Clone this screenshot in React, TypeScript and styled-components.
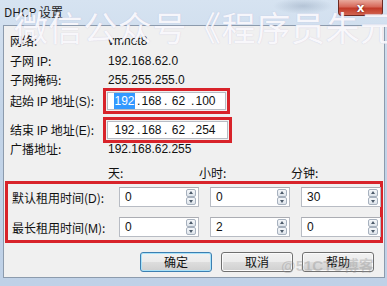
import React from "react";
import styled, { createGlobalStyle } from "styled-components";

const Global = createGlobalStyle`
  html, body { margin: 0; padding: 0; background: #fff; }
  body { font-family: "Noto Sans CJK SC", "Liberation Sans", sans-serif; }
`;

const Window = styled.div`
  position: relative;
  width: 387px;
  height: 286px;
  overflow: hidden;
  box-sizing: border-box;
  padding: 0 2px 8px 3px;
  display: flex;
  flex-direction: column;
  background: linear-gradient(180deg, #d6e3f1 0%, #c3d4e8 40%, #bfd1e7 100%);
`;

const TitleBar = styled.div`
  height: 25px;
  display: flex;
  align-items: flex-start;
  justify-content: space-between;
  background: radial-gradient(ellipse 30px 8px at 300px 6px, rgba(120, 140, 165, 0.35), transparent);
`;

const Title = styled.span`
  margin: 4px 0 0 1px;
  font-size: 12px;
  line-height: 16px;
  color: #1e1e1e;
`;

const CloseBtn = styled.div`
  width: 45px;
  height: 16px;
  margin-right: 2px;
  border: 1px solid #6d2a22;
  border-top: none;
  border-radius: 0 0 4px 4px;
  box-sizing: border-box;
  background: linear-gradient(180deg, #e9a99c 0%, #d7695a 45%, #c23b29 55%, #d2644f 100%);
  display: flex;
  align-items: center;
  justify-content: center;
  color: #fff;
  font: bold 12px "DejaVu Sans", sans-serif;
  line-height: 12px;
  text-shadow: 0 0 2px #5a1008;
`;

const Client = styled.div`
  flex: 1;
  border: 1px solid #8c9bad;
  background: #f0f0f0;
  padding: 5px 10px 0 6px;
  font-size: 12px;
  color: #111;
`;

const Row = styled.div<{ $h: number }>`
  height: ${(p) => p.$h}px;
  display: grid;
  grid-template-columns: 98px 1fr;
  align-items: center;
  line-height: 14px;
`;

const Value = styled.span`
  font-family: "Liberation Sans", sans-serif;
  font-size: 12px;
`;

const Mono = styled.span`
  font-family: "Liberation Sans", sans-serif;
`;

const IpFrame = styled.div<{ $w: number }>`
  width: ${(p) => p.$w}px;
  height: 100%;
  box-sizing: border-box;
  margin-left: -5px;
  border: 3px solid #d8232a;
  padding: 1px;
  display: flex;
`;

const IpInput = styled.div`
  flex: 1;
  background: #fff;
  border: 1px solid #b8bcc4;
  display: flex;
  align-items: center;
  padding-left: 6px;
  font-family: "Liberation Sans", sans-serif;
  font-size: 12px;
`;

const IpPart = styled.span<{ $sel?: boolean }>`
  display: inline-block;
  width: 21px;
  text-align: center;
  padding: 1px 0;
  background: ${(p) => (p.$sel ? "#3399ff" : "transparent")};
  color: ${(p) => (p.$sel ? "#fff" : "#111")};
`;

const Dot = styled.span`
  display: inline-block;
  width: 3px;
  margin: 0 1px 0 2px;
`;

const Headers = styled.div`
  height: 24px;
  display: grid;
  grid-template-columns: 98px 91px 92px 1fr;
  align-items: end;
  line-height: 14px;
  padding-bottom: 1px;
  box-sizing: border-box;
`;

const LeaseBox = styled.div`
  margin: 0 -9px 0 -5px;
  height: 62px;
  box-sizing: border-box;
  border: 3px solid #d8232a;
  padding: 3px 0 3px 4px;
  display: flex;
  flex-direction: column;
  gap: 10px;
`;

const LeaseRow = styled.div`
  height: 20px;
  display: grid;
  grid-template-columns: 96px 80px 80px 80px;
  column-gap: 11px;
  align-items: center;
`;

const SpinBox = styled.div`
  position: relative;
  height: 20px;
  box-sizing: border-box;
  background: #fff;
  border: 1px solid #b8bcc4;
  border-top-color: #abadb3;
  padding: 2px 0 0 5px;
  font-family: "Liberation Sans", sans-serif;
  font-size: 12px;
  line-height: 14px;
`;

const Spinners = styled.div`
  position: absolute;
  right: 2px;
  top: 1px;
  display: flex;
  flex-direction: column;
`;

const SpinBtn = styled.div<{ $up?: boolean }>`
  width: 10px;
  height: 8px;
  box-sizing: border-box;
  border: 1px solid #a7b1be;
  border-radius: 2px;
  background: linear-gradient(180deg, #f6f8fb, #dde3ea);
  position: relative;
  &::after {
    content: "";
    position: absolute;
    left: 2px;
    top: ${(p) => (p.$up ? "1px" : "2px")};
    border-left: 2px solid transparent;
    border-right: 2px solid transparent;
    ${(p) => (p.$up ? "border-bottom: 3px solid #4d5b6b;" : "border-top: 3px solid #4d5b6b;")}
  }
`;

const ButtonRow = styled.div`
  margin-top: 9px;
  display: flex;
  justify-content: flex-end;
  gap: 9px;
`;

const Button = styled.button<{ $primary?: boolean }>`
  width: 72px;
  height: 20px;
  padding: 0;
  border-radius: 3px;
  border: 1px solid ${(p) => (p.$primary ? "#3c7fb1" : "#707070")};
  box-shadow: ${(p) => (p.$primary ? "inset 0 0 0 1px #a9e2f9" : "inset 0 0 0 1px #fbfbfb")};
  background: linear-gradient(180deg, #f2f2f2 0%, #ebebeb 48%, #dddddd 52%, #cfcfcf 100%);
  font-family: "Noto Sans CJK SC", sans-serif;
  font-size: 12px;
  line-height: 16px;
  color: #111;
`;

const Watermark = styled.div`
  position: absolute;
  left: 14px;
  top: 3px;
  white-space: nowrap;
  font-family: "Noto Sans CJK SC", sans-serif;
  font-size: 34px;
  line-height: 48px;
  letter-spacing: 0.6px;
  color: rgba(255, 255, 255, 0.9);
  text-shadow: 0 0 1px rgba(170, 160, 210, 0.6);
  pointer-events: none;
`;

const Stamp = styled.div`
  position: absolute;
  left: 281px;
  top: 254px;
  white-space: nowrap;
  font-family: "Liberation Sans", "Noto Sans CJK SC", sans-serif;
  font-size: 15px;
  font-weight: bold;
  color: rgba(140, 140, 140, 0.35);
  pointer-events: none;
`;

const Spin = ({ v }: { v: string }) => (
  <SpinBox>
    {v}
    <Spinners>
      <SpinBtn $up />
      <SpinBtn />
    </Spinners>
  </SpinBox>
);

const Ip = ({ parts, sel }: { parts: string[]; sel?: boolean }) => (
  <IpInput>
    <IpPart $sel={sel}>{parts[0]}</IpPart>
    <Dot>.</Dot>
    <IpPart>{parts[1]}</IpPart>
    <Dot>.</Dot>
    <IpPart>{parts[2]}</IpPart>
    <Dot>.</Dot>
    <IpPart>{parts[3]}</IpPart>
  </IpInput>
);

export default function App() {
  return (
    <Window>
      <Global />
      <TitleBar>
        <Title>DHCP 设置</Title>
        <CloseBtn>x</CloseBtn>
      </TitleBar>
      <Client>
        <Row $h={20}>
          <span>网络:</span>
          <Value>vmnet8</Value>
        </Row>
        <Row $h={20}>
          <span>
            子网 <Mono>IP</Mono>:
          </span>
          <Value>192.168.62.0</Value>
        </Row>
        <Row $h={17}>
          <span>子网掩码:</span>
          <Value>255.255.255.0</Value>
        </Row>
        <Row $h={24}>
          <span>
            起始 <Mono>IP</Mono> 地址(<Mono>S</Mono>):
          </span>
          <IpFrame $w={127}>
            <Ip parts={["192", "168", "62", "100"]} sel />
          </IpFrame>
        </Row>
        <Row $h={5} />
        <Row $h={23}>
          <span>
            结束 <Mono>IP</Mono> 地址(<Mono>E</Mono>):
          </span>
          <IpFrame $w={129}>
            <Ip parts={["192", "168", "62", "254"]} />
          </IpFrame>
        </Row>
        <Row $h={17}>
          <span>广播地址:</span>
          <Value>192.168.62.255</Value>
        </Row>
        <Headers>
          <span />
          <span>天:</span>
          <span>小时:</span>
          <span>分钟:</span>
        </Headers>
        <LeaseBox>
          <LeaseRow>
            <span>
              默认租用时间(<Mono>D</Mono>):
            </span>
            <Spin v="0" />
            <Spin v="0" />
            <Spin v="30" />
          </LeaseRow>
          <LeaseRow>
            <span>
              最长租用时间(<Mono>M</Mono>):
            </span>
            <Spin v="0" />
            <Spin v="2" />
            <Spin v="0" />
          </LeaseRow>
        </LeaseBox>
        <ButtonRow>
          <Button $primary>确定</Button>
          <Button>取消</Button>
          <Button>帮助</Button>
        </ButtonRow>
      </Client>
      <Watermark>微信公众号《程序员朱元璋》</Watermark>
      <Stamp>@51CTO博客</Stamp>
    </Window>
  );
}
